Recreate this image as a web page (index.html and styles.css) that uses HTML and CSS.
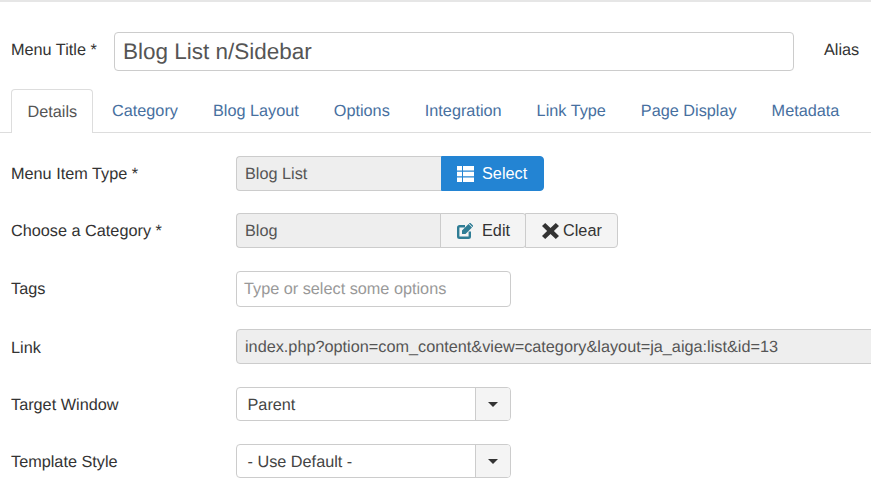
FILE: index.html
```html
<!DOCTYPE html>
<html lang="en">
<head>
    <meta charset="UTF-8">
    <meta name="viewport" content="width=device-width, initial-scale=1.0">
    <title>Edit Menu Item</title>
    <link rel="stylesheet" href="styles.css">
</head>
<body>

<div class="title-row">
    <label class="title-label">Menu Title *</label>
    <div class="title-input">Blog List n/Sidebar</div>
    <label class="alias-label">Alias</label>
</div>

<ul class="tabs">
    <li class="tab active">Details</li>
    <li class="tab">Category</li>
    <li class="tab">Blog Layout</li>
    <li class="tab">Options</li>
    <li class="tab">Integration</li>
    <li class="tab">Link Type</li>
    <li class="tab">Page Display</li>
    <li class="tab">Metadata</li>
</ul>

<div class="form">
    <div class="row row-type">
        <label class="row-label">Menu Item Type *</label>
        <div class="group">
            <div class="readonly">Blog List</div>
            <button class="btn btn-primary">
                <svg class="icon" width="17" height="16" viewBox="0 0 17 16"><path fill="#fff" d="M0 0h5v4.500H0zM6 0h11v4.500H6zM0 5.700h5v4.500H0zM6 5.700h11v4.500H6zM0 11.500h5V16H0zM6 11.500h11V16H6z"/></svg>
                Select
            </button>
        </div>
    </div>

    <div class="row row-category">
        <label class="row-label">Choose a Category *</label>
        <div class="group">
            <div class="readonly">Blog</div>
            <button class="btn btn-edit">
                <svg class="icon" width="16" height="16" viewBox="0 0 16 16"><path fill="none" stroke="#2f7d95" stroke-width="2.400" d="M8 3.200H2.500a1.300 1.300 0 0 0-1.300 1.300v9a1.300 1.300 0 0 0 1.300 1.300h9a1.300 1.300 0 0 0 1.300-1.300V8.500"/><path fill="#2f7d95" d="M5 7.500 11.500 1 15 4.500 8.500 11H5zM12.500 0h1l2.500 2.500v1l-.5.500L12 .5z"/></svg>
                Edit
            </button>
            <button class="btn btn-clear">
                <svg class="icon" width="17" height="16" viewBox="0 0 17 16"><path fill="#333" d="M3.200 0 8.500 4.900 13.800 0 17 3l-5.100 5 5.100 5-3.200 3-5.300-4.900L3.200 16 0 13l5.100-5L0 3z"/></svg>
                Clear
            </button>
        </div>
    </div>

    <div class="row row-tags">
        <label class="row-label">Tags</label>
        <div class="tags-input">Type or select some options</div>
    </div>

    <div class="row row-link">
        <label class="row-label">Link</label>
        <div class="link-input">index.php?option=com_content&amp;view=category&amp;layout=ja_aiga:list&amp;id=13</div>
    </div>

    <div class="row row-target">
        <label class="row-label">Target Window</label>
        <div class="select">
            <span class="select-value">Parent</span>
            <span class="select-arrow"><i class="caret"></i></span>
        </div>
    </div>

    <div class="row row-style">
        <label class="row-label">Template Style</label>
        <div class="select">
            <span class="select-value">- Use Default -</span>
            <span class="select-arrow"><i class="caret"></i></span>
        </div>
    </div>
</div>

</body>
</html>
```

FILE: styles.css
```css
html, body {
    height: 489px;
    overflow: hidden;
}
body {
    margin: 0;
    background-color: #fff;
    border-top: 2px solid #e6e6e6;
    color: #333;
    font-family: "Liberation Sans", Arial, sans-serif;
    font-size: 16.25px;
    text-rendering: geometricPrecision;
}
.title-row {
    display: flex;
    align-items: center;
    height: 39px;
    margin: 30px 0 0 11px;
}
.title-label {
    width: 103px;
    margin-top: -3px;
}
.title-input {
    box-sizing: border-box;
    width: 680px;
    height: 39px;
    padding: 0 8px;
    border: 1px solid #ccc;
    border-radius: 4px;
    color: #555;
    font-size: 22.5px;
    line-height: 38px;
}
.alias-label {
    margin-left: 30px;
    margin-top: -3px;
}
.tabs {
    display: flex;
    height: 43px;
    margin: 18px 0 0 0;
    padding: 0 0 0 11px;
    border-bottom: 1px solid #ddd;
    list-style: none;
}
.tab {
    height: 43px;
    padding: 0 17.500px;
    color: #47709f;
    line-height: 45px;
}
.tab.active {
    box-sizing: border-box;
    width: 82px;
    height: 44px;
    margin-right: 1.500px;
    padding: 0 0 0 15.500px;
    border: 1px solid #ddd;
    border-bottom: 0;
    border-radius: 4px 4px 0 0;
    background-color: #fff;
    color: #555;
    line-height: 44px;
}
.row {
    display: flex;
    align-items: center;
    padding-left: 11px;
}
.row-type { margin-top: 23px; }
.row-category { margin-top: 22px; }
.row-tags { margin-top: 23px; }
.row-link { margin-top: 22px; }
.row-target { margin-top: 23px; }
.row-style { margin-top: 23px; }
.row-label {
    width: 225px;
    flex: none;
    padding-top: 1px;
}
.row-link .row-label,
.row-target .row-label,
.row-style .row-label {
    padding-top: 3px;
}
.group {
    display: flex;
}
.readonly {
    box-sizing: border-box;
    width: 205px;
    height: 35px;
    padding: 0 8px;
    border: 1px solid #ccc;
    border-right: 0;
    border-radius: 4px 0 0 4px;
    background-color: #eee;
    color: #555;
    line-height: 34px;
}
.btn {
    display: flex;
    align-items: center;
    box-sizing: border-box;
    height: 35px;
    border: 1px solid #ccc;
    font-family: inherit;
    font-size: 16.25px;
}
.icon {
    flex: none;
}
.btn-primary {
    width: 103px;
    padding: 0 0 0 15px;
    border-color: #2384d3;
    border-radius: 0 4px 4px 0;
    background-color: #2384d3;
    color: #fff;
}
.btn-primary .icon {
    margin-right: 8px;
}
.btn-edit {
    width: 86px;
    margin-left: -1px;
    padding: 0 0 0 16px;
    border-radius: 0 3px 3px 0;
    background-color: #f4f4f4;
    color: #333;
}
.btn-edit .icon {
    margin-right: 9px;
}
.btn-clear {
    width: 93px;
    margin-left: -1px;
    padding: 0 0 0 16px;
    border-radius: 0 4px 4px 0;
    background-color: #f4f4f4;
    color: #333;
}
.btn-clear .icon {
    margin-right: 4px;
}
.tags-input {
    box-sizing: border-box;
    width: 275px;
    height: 36px;
    padding: 0 7px;
    border: 1px solid #ccc;
    border-radius: 4px;
    color: #999;
    line-height: 35px;
}
.link-input {
    box-sizing: border-box;
    width: 660px;
    flex: none;
    height: 35px;
    padding: 0 8px;
    border: 1px solid #ccc;
    border-radius: 4px;
    background-color: #eee;
    color: #555;
    line-height: 34px;
}
.select {
    display: flex;
    box-sizing: border-box;
    width: 275px;
    height: 34px;
    border: 1px solid #ccc;
    border-radius: 4px;
}
.select-value {
    flex: 1;
    padding-left: 10.500px;
    color: #444;
    line-height: 34px;
}
.select-arrow {
    display: flex;
    align-items: center;
    justify-content: center;
    width: 34px;
    border-left: 1px solid #ccc;
    border-radius: 0 3px 3px 0;
    background-color: #f4f4f4;
}
.caret {
    width: 0;
    height: 0;
    border-top: 5px solid #333;
    border-left: 5px solid transparent;
    border-right: 5px solid transparent;
}
```
